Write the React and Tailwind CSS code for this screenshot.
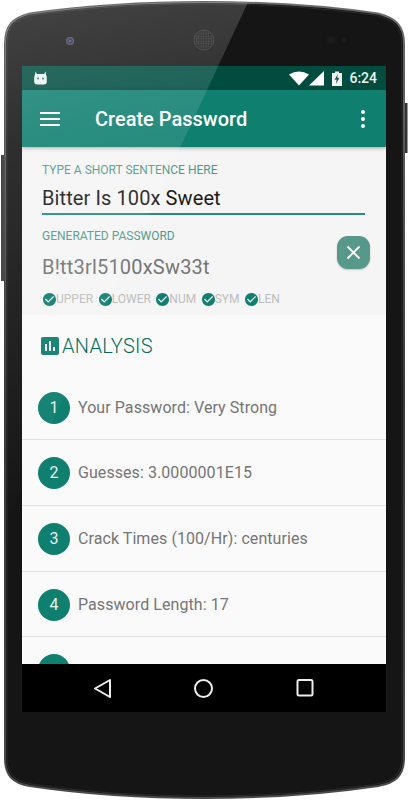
const rows = [
  "Your Password: Very Strong",
  "Guesses: 3.0000001E15",
  "Crack Times (100/Hr): centuries",
  "Password Length: 17",
];
const chips = ["UPPER", "LOWER", "NUM", "SYM", "LEN"];
const body = "M5 44C5 26 12 18 30 13.500C90 5 150 2 204 2C258 2 318 5 378 13.500C396 18 404 26 404 44V758C404 775 396 783 378 786C318 795 258 798 204 798C150 798 90 795 30 786C12 783 5 775 5 758Z";

function Shell() {
  return (
    <svg className="absolute inset-0" width="408" height="800" viewBox="0 0 408 800">
      <defs>
        <linearGradient id="rim" x1="0" y1="0" x2="0" y2="1">
          <stop offset="0" stopColor="#6a6a6a" />
          <stop offset="0.5" stopColor="#3a3a3a" />
          <stop offset="1" stopColor="#4a4a4a" />
        </linearGradient>
        <radialGradient id="lens">
          <stop offset="0" stopColor="#6a78e0" />
          <stop offset="0.45" stopColor="#20243c" />
          <stop offset="1" stopColor="#5a5a5a" />
        </radialGradient>
        <pattern id="mesh" width="2.500" height="2.500" patternUnits="userSpaceOnUse">
          <circle cx="1.200" cy="1.200" r="0.600" fill="#4a4a4a" />
        </pattern>
      </defs>
      <rect x="404" y="103" width="3.500" height="50" fill="#333" />
      <rect x="1" y="155" width="5" height="126" fill="#484848" />
      <path d={body} fill="#151515" stroke="url(#rim)" strokeWidth="2" />
      <path d={body} fill="none" stroke="#2a2a2a" strokeWidth="1" transform="translate(204 400) scale(0.99 0.995) translate(-204 -400)" />
      <circle cx="70" cy="41" r="4" fill="url(#lens)" />
      <circle cx="204" cy="40" r="10" fill="#1a1a1a" stroke="#333" />
      <circle cx="204" cy="40" r="8.500" fill="url(#mesh)" />
      <circle cx="331" cy="40" r="4" fill="#1b1b1b" />
      <circle cx="344" cy="40" r="2.500" fill="#1b1b1b" />
    </svg>
  );
}

function Glare() {
  return (
    <svg className="absolute inset-0 z-10 pointer-events-none" width="408" height="800" viewBox="0 0 408 800">
      <defs>
        <linearGradient id="glare" gradientUnits="userSpaceOnUse" x1="0" y1="0" x2="90" y2="480">
          <stop offset="0" stopColor="#fff" stopOpacity="0.2" />
          <stop offset="0.3" stopColor="#fff" stopOpacity="0.11" />
          <stop offset="1" stopColor="#fff" stopOpacity="0.01" />
        </linearGradient>
        <clipPath id="bodyclip"><path d={body} /></clipPath>
      </defs>
      <polygon points="0,0 249,0 0,534" fill="url(#glare)" clipPath="url(#bodyclip)" />
    </svg>
  );
}

const Check = () => (
  <svg width="13" height="13" viewBox="2 2 20 20" className="shrink-0" fill="#0f7f70">
    <path d="M12 2C6.480 2 2 6.480 2 12s4.480 10 10 10 10-4.480 10-10S17.520 2 12 2zm-2 15l-5-5 1.410-1.410L10 14.170l7.590-7.590L19 8l-9 9z" />
  </svg>
);

export default function App() {
  return (
    <div className="relative w-[408px] h-[800px] bg-white overflow-hidden font-['Roboto',sans-serif]">
      <Shell />
      <div className="relative pt-[66px] pl-[22px]">
        <div className="w-[364px] h-[646px] flex flex-col overflow-hidden bg-[#fafafa]">
          <div className="h-[24px] shrink-0 bg-[#004d40] flex items-center pl-[12px] pr-[9px]">
            <svg width="13" height="14" viewBox="0 0 13 14" fill="#e8f5f2">
              <path d="M1.500 0.500L3 3H10L11.500 0.500L12 3.500Q12.800 5 12.800 7V10.500Q12.800 13.500 9.800 13.500H3.200Q0.200 13.500 0.200 10.500V7Q0.200 5 1 3.500Z" />
              <circle cx="4" cy="7.500" r="1" fill="#2f6d66" />
              <circle cx="9" cy="7.500" r="1" fill="#2f6d66" />
            </svg>
            <div className="flex-1" />
            <svg width="35" height="15" viewBox="0 0 35 15" fill="#fff" className="mr-[8px]">
              <path d="M0 3.500Q10 -2.500 20 3.500L10 14.500Z" />
              <path d="M20 14.500L35 0V14.500Z" />
            </svg>
            <svg width="10" height="15" viewBox="0 0 10 15" className="mr-[7px]">
              <path d="M0 2H3V0.500H7V2H10V15H0Z" fill="#f4f4f4" />
              <path d="M5.800 3L2.500 8.800H4.600L3.900 13L7.500 6.800H5.200Z" fill="#1d5c52" />
            </svg>
            <span className="text-[14px] leading-none font-medium text-[#f1f1f1]">6:24</span>
          </div>
          <div className="h-[57px] shrink-0 bg-[#0f7f70] flex items-center pl-[18px] pr-[21px] relative z-[1] shadow-[0_1px_4px_rgba(0,0,0,0.35)]">
            <div className="w-[20px] flex flex-col gap-[4px] mr-[35px]">
              <div className="h-[2px] bg-white" />
              <div className="h-[2px] bg-white" />
              <div className="h-[2px] bg-white" />
            </div>
            <span className="flex-1 text-[20px] font-medium text-white leading-none">Create Password</span>
            <div className="flex flex-col gap-[3px]">
              <div className="w-[4px] h-[4px] rounded-full bg-white" />
              <div className="w-[4px] h-[4px] rounded-full bg-white" />
              <div className="w-[4px] h-[4px] rounded-full bg-white" />
            </div>
          </div>
          <div className="h-[168px] shrink-0 bg-[#f5f5f5] px-[20px] pt-[16px] flex flex-col">
            <div className="text-[12px] leading-[14px] text-[#4f9a8c] whitespace-nowrap">TYPE A SHORT SENTENCE HERE</div>
            <div className="mt-[8px] h-[30px] border-b-2 border-[#26907f] w-[323px] text-[20px] leading-[26px] tracking-[0.1px] text-[#1a1a1a] whitespace-nowrap">Bitter Is 100x Sweet</div>
            <div className="flex items-start">
              <div className="flex-1">
                <div className="mt-[14px] text-[12px] leading-[14px] text-[#4f9a8c]">GENERATED PASSWORD</div>
                <div className="mt-[11px] text-[20px] leading-[26px] tracking-[0.2px] text-[#757575] whitespace-nowrap">B!tt3rl5100xSw33t</div>
              </div>
              <div className="mt-[21px] mr-[-4px] w-[33px] h-[33px] rounded-[11px] bg-[#56988a] shadow-[0_1px_2px_rgba(0,0,0,0.2)] flex items-center justify-center">
                <svg width="15" height="15" viewBox="0 0 15 15" stroke="#fff" strokeWidth="1.800" fill="none">
                  <path d="M1.500 1.500L13.500 13.500M13.500 1.500L1.500 13.500" />
                </svg>
              </div>
            </div>
            <div className="mt-[12px] ml-[1px] flex gap-[5.5px]">
              {chips.map((c) => (
                <div key={c} className="flex items-center">
                  <Check />
                  <span className="text-[12px] leading-[14px] text-[#bdbdbd]">{c}</span>
                </div>
              ))}
            </div>
          </div>
          <div className="flex-1 bg-[#fafafa] overflow-hidden">
            <div className="flex items-center pl-[16px] pt-[1px] h-[60px]">
              <svg width="24" height="24" viewBox="0 0 24 24" fill="#0f7f70" className="shrink-0">
                <path d="M19 3H5c-1.100 0-2 .9-2 2v14c0 1.100.9 2 2 2h14c1.100 0 2-.9 2-2V5c0-1.100-.9-2-2-2zM9 17H7v-7h2v7zm4 0h-2V7h2v10zm4 0h-2v-4h2v4z" />
              </svg>
              <span className="text-[20px] leading-none tracking-[0.3px] font-light text-[#00695c]">ANALYSIS</span>
            </div>
            <div className="h-[64px] border-b border-[#e0e0e0] flex items-center pl-[16px] mt-[1px]">
              <Num n="1" />
              <span className="ml-[8px] text-[16px] text-[#757575] tracking-[0.07px] whitespace-nowrap">{rows[0]}</span>
            </div>
            {rows.slice(1).map((r, i) => (
              <div key={r} className={`${i === 2 ? "h-[65px] pt-[1px]" : "h-[66px]"} border-b border-[#e0e0e0] flex items-center pl-[16px]`}>
                <Num n={String(i + 2)} />
                <span className="ml-[8px] text-[16px] text-[#757575] tracking-[0.07px] whitespace-nowrap">{r}</span>
              </div>
            ))}
            <div className="h-[66px] flex items-center pl-[16px]">
              <Num n="" />
            </div>
          </div>
          <div className="h-[48px] shrink-0 bg-black flex items-center">
            <svg width="364" height="48" viewBox="0 0 364 48" fill="none" stroke="#eee" strokeWidth="2" strokeLinejoin="round">
              <path d="M88 16L73 24.500L88 33Z" />
              <circle cx="181.500" cy="24.500" r="8.500" />
              <rect x="275.500" y="16" width="15" height="15.500" rx="1.500" />
            </svg>
          </div>
        </div>
      </div>
      <Glare />
    </div>
  );
}

function Num({ n }) {
  return (
    <div className="w-[32px] h-[32px] shrink-0 rounded-full bg-[#0f7f70] flex items-center justify-center text-[16px] text-[#e6f2f0]">
      {n}
    </div>
  );
}
